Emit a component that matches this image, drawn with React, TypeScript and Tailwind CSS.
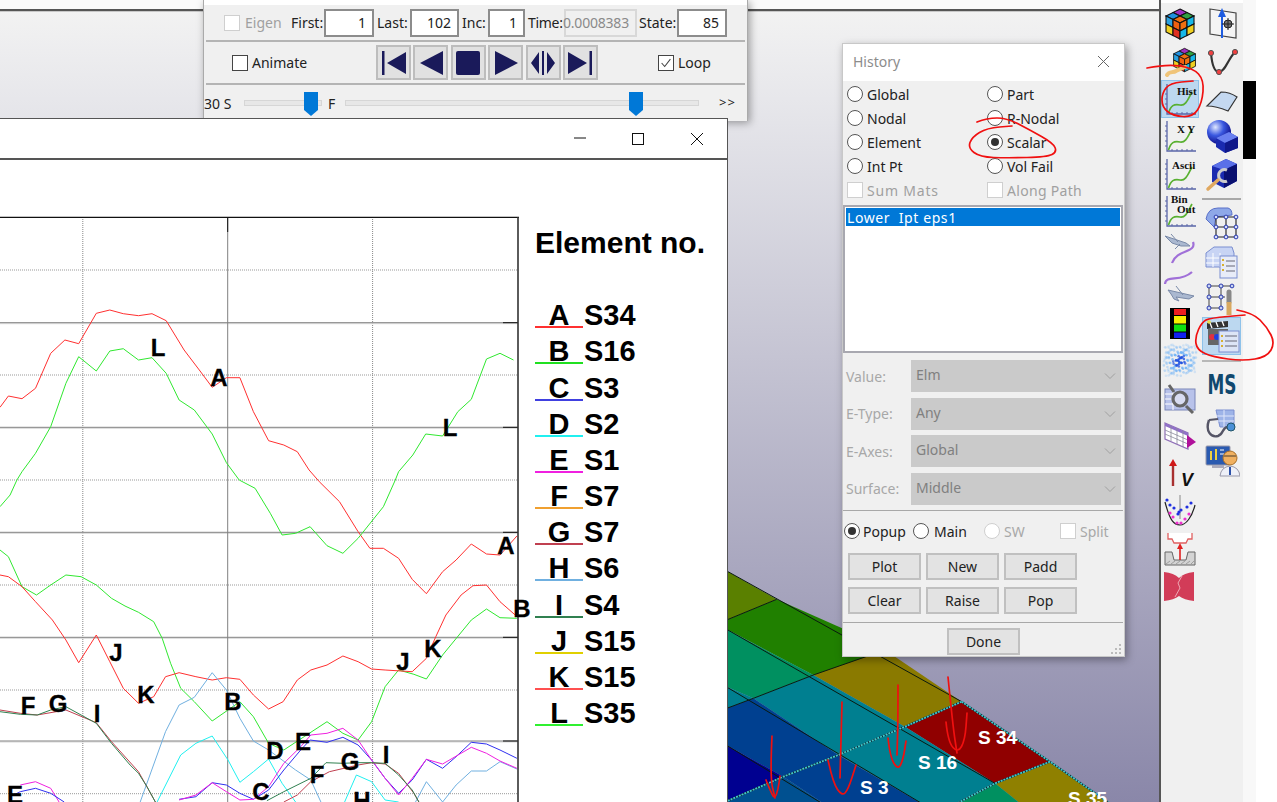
import React from "react";

type P = [number, number];
const z1 = (a: number[]): P[] => { const r: P[] = []; for (let i = 0; i < a.length; i += 2) r.push([a[i] / 2.96, a[i + 1] / 3 + 160]); return r; };
const z2 = (a: number[]): P[] => { const r: P[] = []; for (let i = 0; i < a.length; i += 2) r.push([a[i] / 2.96, a[i + 1] / 3 + 480]); return r; };
const pl = (p: P[]) => p.map(([x, y]) => `${x.toFixed(1)},${y.toFixed(1)}`).join(" ");

const curves: { c: string; p: P[] }[] = [
  { c: "#ff3030", p: [...z1([0,742,25,708,65,716,105,685,150,580,192,540,233,551,285,460,325,450,365,461,410,467,450,461,492,482,545,570,590,630,628,682,670,653,710,653,750,755,795,842,840,855,880,875,915,930]), ...z2([945,5,1005,65,1060,155,1095,205,1135,205,1180,235,1220,298,1262,341,1310,275,1350,240,1395,192,1440,222,1480,225,1530,168])] },
  { c: "#30e830", p: [...z2([0,80,30,45,50,0]), ...z1([65,935,105,880,150,800,195,670,233,590,285,633,325,573,365,566,410,600,450,593,492,640,530,720,575,750,628,822,670,908,708,960]), ...z2([755,25,800,100,835,165,875,160,918,140,968,197,1015,220,1060,175,1135,80,1170,0]), ...z1([1180,935,1222,885,1260,822,1310,828,1355,755,1395,718,1440,597,1480,580,1520,600])] },
  { c: "#30e830", p: z2([0,210,25,230,65,320,108,345,150,315,195,285,240,290,285,315,330,355,370,378,410,397,455,425,480,475,505,550,535,625,575,665,628,723,675,690,710,665,750,710,795,790,840,810,900,770,968,725,1015,760,1060,780,1100,725,1140,620,1180,570,1225,583,1262,597,1310,525,1395,420,1440,387,1480,413,1530,415]) },
  { c: "#ff3030", p: z2([0,285,25,290,65,320,105,365,155,420,195,480,233,548,285,465,325,545,365,625,410,670,455,650,490,590,530,578,580,590,628,600,670,593,710,598,750,645,795,687,838,665,880,600,920,570,968,555,1015,528,1060,545,1100,567,1140,570,1220,575,1262,535,1290,470,1320,405,1365,345,1400,317,1440,315,1480,365,1525,405]) },
  { c: "#20f0f0", p: z2([465,966,535,825,580,790,628,768,675,840,710,907,750,875,795,837,835,910,875,966]) },
  { c: "#20f0f0", p: z2([1020,966,1055,885,1100,905,1140,960,1180,966]) },
  { c: "#70b0e0", p: z2([415,966,490,755,530,675,575,652,628,578,670,630,710,715,750,783,795,810,875,870,920,900,950,966]) },
  { c: "#70b0e0", p: z2([1230,966,1262,905,1310,966,1350,915,1395,873,1440,873,1480,845,1530,867]) },
  { c: "#f020e0", p: z2([60,915,105,905,150,925,175,966]) },
  { c: "#3030f0", p: z2([30,950,60,935,105,925,150,940,190,966]) },
  { c: "#3030f0", p: z2([530,958,580,950,628,908,670,915,710,940,750,958,795,930,840,870,890,810,918,780,968,787,1015,772,1060,795,1100,840,1140,895,1180,940,1220,900,1262,838,1310,865,1350,830,1395,787,1440,792,1480,810,1530,835]) },
  { c: "#f020e0", p: z2([530,960,580,945,628,908,670,935,710,960,750,958,795,920,840,850,890,800,920,765,968,760,1015,745,1060,780,1100,840,1140,895,1180,945,1220,895,1262,838,1310,852,1395,802,1440,820,1480,843,1530,865]) },
  { c: "#c04050", p: z2([0,690,60,700,110,705,195,690,285,728,330,785,410,875,460,966]) },
  { c: "#c04050", p: z2([840,966,880,945,920,905,975,875,1060,855,1100,848,1140,852,1180,880,1225,940,1240,966]) },
  { c: "#308050", p: z2([0,695,60,703,110,705,150,690,195,680,240,705,285,730,330,790,385,855,410,880,435,920,460,966]) },
  { c: "#308050", p: z2([790,962,840,935,920,895,965,848,1015,850,1060,848,1100,848,1140,850,1180,885,1220,930,1240,966]) },
];

const labels: [string, number, number][] = [
  ["L",158,347],["A",219,377],["L",450,427],["A",506,545],["B",522,608],["J",116,652],["K",146,694],["F",28,705],["G",58,703],["I",97,713],["B",233,701],["D",275,750],["E",303,741],["C",261,791],["F",317,774],["G",350,761],["I",386,754],["H",362,800],["E",15,794],["J",403,661],["K",433,648],
];

const solidY = [322.7, 427.3, 532.3, 637.3, 741];
const dotY = [270, 375, 480, 585, 690, 793.7];

function Chart() {
  return (
    <svg width="520" height="642" viewBox="0 160 520 642" className="shrink-0 overflow-visible">
      {dotY.map((y) => <line key={y} x1="0" x2="517" y1={y} y2={y} stroke="#999" strokeDasharray="1 1" />)}
      {[82.8, 372.6].map((x) => <line key={x} x1={x} x2={x} y1="217" y2="802" stroke="#888" strokeDasharray="1 1" />)}
      {solidY.map((y) => (
        <g key={y}>
          <line x1="0" x2="518" y1={y + 1} y2={y + 1} stroke="#d8d8d8" />
          <line x1="0" x2="518" y1={y} y2={y} stroke="#808080" />
          <line x1="503" x2="518" y1={y} y2={y} stroke="#111" />
        </g>
      ))}
      <line x1="227.7" x2="227.7" y1="217" y2="802" stroke="#808080" />
      <line x1="227.7" x2="227.7" y1="217" y2="232" stroke="#111" />
      <line x1="0" x2="519" y1="217.3" y2="217.3" stroke="#111" strokeWidth="1.2" />
      <line x1="518" x2="518" y1="217" y2="802" stroke="#333" strokeWidth="1.6" />
      {curves.map((c, i) => <polyline key={i} points={pl(c.p)} fill="none" stroke={c.c} strokeWidth="1" />)}
      {labels.map(([t, x, y], i) => (
        <text key={i} x={x} y={y + 8.5} textAnchor="middle" fontSize="24" fontWeight="700" fontFamily="'Liberation Sans', Arial, sans-serif" fill="#000" stroke="#000" strokeWidth="0.3">{t}</text>
      ))}
    </svg>
  );
}

const legend: [string, string, string][] = [
  ["A","S34","border-[#ff3030]"],["B","S16","border-[#20e020]"],["C","S3","border-[#4040e0]"],["D","S2","border-[#20f0f0]"],["E","S1","border-[#f020e0]"],["F","S7","border-[#f0a030]"],["G","S7","border-[#c04050]"],["H","S6","border-[#70b0e0]"],["I","S4","border-[#308050]"],["J","S15","border-[#e0d000]"],["K","S15","border-[#ff5050]"],["L","S35","border-[#30f030]"],
];

function Legend() {
  return (
    <div className="ml-[15px] flex flex-col font-['Liberation_Sans',Arial,sans-serif] font-bold text-black">
      <div className="mt-[66px] text-[30px] leading-[34px] whitespace-nowrap">Element no.</div>
      <div className="mt-[32px] flex flex-col">
        {legend.map(([l, s, b]) => (
          <div key={l} className="flex h-[36.18px] items-end text-[29px]">
            <span className={`w-12 border-b-2 text-center leading-[22px] ${b}`}>{l}</span>
            <span className="ml-px mb-[2px] leading-[22px]">{s}</span>
          </div>
        ))}
      </div>
    </div>
  );
}

function PlotWindow() {
  return (
    <div className="absolute left-0 top-[118px] flex h-[684px] w-[728px] flex-col overflow-hidden border-r border-t border-[#555] bg-white">
      <div className="flex h-[41px] shrink-0 items-start border-b-2 border-[#555] bg-white">
        <svg width="727" height="36" viewBox="0 119 727 36" className="shrink-0">
          <line x1="574" x2="586" y1="138" y2="138" stroke="#111" />
          <rect x="632.5" y="133.5" width="11" height="11" fill="none" stroke="#111" />
          <path d="M691 133 L703 145 M703 133 L691 145" stroke="#111" fill="none" />
        </svg>
      </div>
      <div className="flex min-h-0 flex-1">
        <Chart />
        <Legend />
      </div>
    </div>
  );
}

const Check = ({ dis, on }: { dis?: boolean; on?: boolean }) => (
  <span className={`flex h-4 w-4 shrink-0 items-center justify-center border bg-white ${dis ? "border-[#cfcfcf]" : "border-[#444]"}`}>
    {on && <svg viewBox="0 0 16 16" className="h-3.5 w-3.5"><path d="M3 8 L6.5 12 L13 3.5" fill="none" stroke="#444" strokeWidth="1.2" /></svg>}
  </span>
);

const Radio = ({ on, dis }: { on?: boolean; dis?: boolean }) => (
  <span className={`flex h-4 w-4 shrink-0 items-center justify-center rounded-full border-[1.5px] bg-white ${dis ? "border-[#cfcfcf]" : "border-[#555]"}`}>
    {on && <span className="h-2 w-2 rounded-full bg-[#333]" />}
  </span>
);

const Field = ({ v, w, dis }: { v: string; w: string; dis?: boolean }) => (
  <div className={`flex h-7 items-center justify-end border-2 pr-[6px] ${w} ${dis ? "border-[#d8d8d8] bg-[#f0f0f0] pr-[2px] tracking-[-0.2px] text-[#8a8a8a]" : "border-[#8c8c8c] bg-white text-[#222]"}`}>{v}</div>
);

const Glyph = ({ d }: { d: string }) => (
  <div className="flex h-[35px] w-[35px] items-center justify-center border-2 border-[#bdbdbd] bg-[#e1e1e1]">
    <svg viewBox="0 0 30 30" className="h-[30px] w-[30px]"><path d={d} fill="#1a1a5a" /></svg>
  </div>
);

const Thumb = ({ left }: { left: string }) => (
  <svg viewBox="0 0 14 24" className={`absolute top-[-9px] h-6 w-[14px] ${left}`}><path d="M0,0 H14 V18 L7,24 L0,18 Z" fill="#0078d7" /></svg>
);

function AnimWindow() {
  return (
    <div className="absolute left-[203px] top-0 flex h-[121px] w-[545px] flex-col border-x border-[#aaa] bg-white text-[14px] text-[#222] shadow-[2px_2px_8px_rgba(0,0,0,0.35)]">
      <div className="mt-[5px] flex flex-1 flex-col bg-[#f0f0f0]">
        <div className="flex h-[35px] shrink-0 items-center pl-5">
          <Check dis />
          <span className="ml-[5px] w-[46px] text-[#a0a0a0]">Eigen</span>
          <span className="w-[33px]">First:</span><Field v="1" w="w-[50px]" />
          <span className="w-[36px] pl-[3px]">Last:</span><Field v="102" w="w-[49px]" />
          <span className="w-[29px] pl-[3px]">Inc:</span><Field v="1" w="w-[37px]" />
          <span className="w-[39px] pl-[3px] tracking-[-0.3px]">Time:</span><Field v="0.0008383" w="w-[73px]" dis />
          <span className="w-[40px] pl-[2px]">State:</span><Field v="85" w="w-[50px]" />
        </div>
        <div className="mx-[2px] h-[2px] shrink-0 bg-[#b4b4b4]" />
        <div className="flex h-[41px] shrink-0 items-center pl-7">
          <Check />
          <span className="ml-[4px] w-[125px]">Animate</span>
          <div className="-ml-px flex gap-[2.4px]">
            <Glyph d="M3 3 H5.5 V27 H3 Z M8 15 L27 4 V26 Z" />
            <Glyph d="M4 15 L27 3 V27 Z" />
            <Glyph d="M3 5 Q3 3 5 3 H25 Q27 3 27 5 V25 Q27 27 25 27 H5 Q3 27 3 25 Z" />
            <Glyph d="M4 3 L27 15 L4 27 Z" />
            <Glyph d="M3 15 L11 4 V26 Z M14 3 H16 V27 H14 Z M19 4 L27 15 L19 26 Z" />
            <Glyph d="M3 4 L22 15 L3 26 Z M24.5 3 H27 V27 H24.5 Z" />
          </div>
          <span className="ml-[60px]"><Check on /></span>
          <span className="ml-1">Loop</span>
        </div>
        <div className="mx-[2px] h-[2px] shrink-0 bg-[#b4b4b4]" />
        <div className="flex flex-1 items-center">
          <span className="w-[40px]">30 S</span>
          <div className="relative h-[6px] w-[78px] border border-[#d6d6d6] bg-[#e7e7e7]"><Thumb left="left-[59px]" /></div>
          <span className="w-[23px] pl-[6px]">F</span>
          <div className="relative h-[6px] w-[354px] border border-[#d6d6d6] bg-[#e7e7e7]"><Thumb left="left-[283px]" /></div>
          <span className="ml-[20px] text-[13px] tracking-[1px]">&gt;&gt;</span>
        </div>
      </div>
    </div>
  );
}

const HBtn = ({ t }: { t: string }) => (
  <div className="flex h-[27px] w-[73px] items-center justify-center border-2 border-[#c0c0c0] bg-[#e3e3e3] text-[#222]">{t}</div>
);

const Sel = ({ label, v }: { label: string; v: string }) => (
  <div className="flex h-8 items-center">
    <span className="ml-[3px] w-[65px] text-[#a8a8a8]">{label}</span>
    <div className="flex h-8 w-[210px] items-center justify-between bg-[#cacaca] pl-[5px] pr-[5px] text-[#808080]">
      <span className="-mt-[3px]">{v}</span>
      <svg width="12" height="8" viewBox="0 0 12 8"><path d="M1 1.5 L6 6.5 L11 1.5" fill="none" stroke="#a0a0a0" /></svg>
    </div>
  </div>
);

function HistoryWindow() {
  const rows: [string, string, boolean?][] = [["Global","Part"],["Nodal","R-Nodal"],["Element","Scalar",true],["Int Pt","Vol Fail"]];
  return (
    <div className="absolute left-[842px] top-[43px] flex h-[614px] w-[283px] flex-col border border-[#c8c8c8] bg-[#f0f0f0] text-[14px] text-[#222] shadow-[2px_3px_8px_rgba(0,0,0,0.35)]">
      <div className="flex h-[37px] shrink-0 items-center justify-between bg-white pb-[2px] pl-[10px] pr-[14px] text-[#8c8c8c]">
        <span>History</span>
        <svg width="13" height="13" viewBox="0 0 13 13"><path d="M1 1 L12 12 M12 1 L1 12" stroke="#666" fill="none" /></svg>
      </div>
      <div className="mt-[1px] flex flex-col pl-1">
        {rows.map(([a, b, on]) => (
          <div key={a} className="flex h-6 items-center">
            <div className="flex w-[140px] items-center gap-1"><Radio /><span>{a}</span></div>
            <div className="flex items-center gap-1"><Radio on={on} /><span>{b}</span></div>
          </div>
        ))}
        <div className="flex h-6 items-center text-[#a0a0a0]">
          <div className="flex w-[140px] items-center gap-1"><Check dis /><span className="tracking-[0.8px]">Sum Mats</span></div>
          <div className="flex items-center gap-1"><Check dis /><span className="tracking-[0.3px]">Along Path</span></div>
        </div>
      </div>
      <div className="ml-[0px] mt-[3px] h-[148px] w-[280px] shrink-0 border-2 border-[#a8a8b0] bg-white p-px">
        <div className="flex h-[18px] items-center whitespace-pre bg-[#0078d7] pl-[1px] tracking-[0.6px] text-white">Lower  Ipt eps1</div>
      </div>
      <div className="mt-[7px] flex flex-col gap-[5.5px]">
        <Sel label="Value:" v="Elm" />
        <Sel label="E-Type:" v="Any" />
        <Sel label="E-Axes:" v="Global" />
        <Sel label="Surface:" v="Middle" />
      </div>
      <div className="mt-[5px] h-px w-[280px] shrink-0 bg-[#a8a8a8]" />
      <div className="flex h-[42px] shrink-0 items-center pl-[1px] pb-[1px]">
        <Radio on /><span className="ml-[3px] w-[50px]">Popup</span>
        <Radio /><span className="ml-[5px] w-[50px]">Main</span>
        <Radio dis /><span className="ml-1 w-[56px] text-[#a8a8a8]">SW</span>
        <Check dis /><span className="ml-1 text-[#a8a8a8]">Split</span>
      </div>
      <div className="flex gap-[5px] pl-[5px]"><HBtn t="Plot" /><HBtn t="New" /><HBtn t="Padd" /></div>
      <div className="mt-[7px] flex gap-[5px] pl-[5px]"><HBtn t="Clear" /><HBtn t="Raise" /><HBtn t="Pop" /></div>
      <div className="mt-[8px] h-px w-[280px] shrink-0 bg-[#a8a8a8]" />
      <div className="mt-[5px] flex justify-center"><HBtn t="Done" /></div>
      <svg width="11" height="10" viewBox="0 0 11 10" className="absolute bottom-[2px] right-[2px]" fill="#bbb">
        <rect x="8" y="0" width="2" height="2" /><rect x="4" y="4" width="2" height="2" /><rect x="8" y="4" width="2" height="2" /><rect x="0" y="8" width="2" height="2" /><rect x="4" y="8" width="2" height="2" /><rect x="8" y="8" width="2" height="2" />
      </svg>
    </div>
  );
}

const zm = (x: number, y: number) => `${x / 3 + 725},${y / 3 + 560}`;
const poly = (a: number[]) => { const r: string[] = []; for (let i = 0; i < a.length; i += 2) r.push(zm(a[i], a[i + 1])); return r.join(" "); };

function Mesh() {
  const cells: [string, number[]][] = [
    ["#5a8000", [0,30,155,118,0,182]],
    ["#208000", [155,118,0,182,0,205,265,345,520,280,480,262]],
    ["#009060", [0,205,265,345,85,415,0,378]],
    ["#8a7a00", [480,270,710,425,540,500,265,345]],
    ["#007f90", [265,345,540,500,340,585,85,415]],
    ["#007f90", [0,378,85,415,0,447]],
    ["#004090", [0,447,85,415,340,585,175,650,0,553]],
    ["#000090", [0,553,175,650,0,726]],
    ["#900000", [710,425,975,605,810,670,540,500]],
    ["#007f90", [540,500,810,670,640,760,340,585]],
    ["#004090", [340,585,640,760,340,760,175,650]],
    ["#005090", [175,650,340,760,0,760,0,726]],
    ["#8f8000", [975,605,1240,790,960,790,810,670]],
    ["#009060", [810,670,960,790,640,760]],
  ];
  const black = [[0,30,710,425],[0,205,810,670],[0,378,640,760],[0,553,340,760],[155,118,0,182],[480,270,265,345,85,415,0,447]];
  const cyan = [[710,425,975,605,1240,790],[710,425,540,500,340,585,175,650,0,726],[975,605,810,670,640,760]];
  return (
    <svg width="1277" height="802" viewBox="0 0 1277 802" className="absolute left-0 top-0">
      {cells.map(([c, p], i) => <polygon key={i} points={poly(p)} fill={c} />)}
      {black.map((p, i) => <polyline key={i} points={poly(p)} fill="none" stroke="#0a1a10" strokeWidth="1" />)}
      {cyan.map((p, i) => (
        <g key={i}>
          <polyline points={poly(p)} fill="none" stroke="#123" strokeWidth="1.8" />
          <polyline points={poly(p)} fill="none" stroke="#40c8c8" strokeWidth="1.8" strokeDasharray="2 1" />
        </g>
      ))}
      {([["S 34",978,744],["S 16",918,769],["S 3",860,794],["S 35",1068,805]] as [string, number, number][]).map(([t, x, y]) => (
        <text key={t} x={x} y={y} fontSize="19" fontWeight="700" fill="#fff" fontFamily="'Liberation Sans', Arial, sans-serif">{t}</text>
      ))}
    </svg>
  );
}

const smooth = (a: number[]) => {
  let d = `M${a[0]},${a[1]}`;
  for (let i = 2; i < a.length - 2; i += 2) {
    const mx = (a[i] + a[i + 2]) / 2, my = (a[i + 1] + a[i + 3]) / 2;
    d += ` Q${a[i]},${a[i + 1]} ${mx},${my}`;
  }
  d += ` L${a[a.length - 2]},${a[a.length - 1]}`;
  return d;
};

function Marks() {
  const strokes = [
    [1147,68,1167,64,1193,68,1204,80,1202,103,1193,117,1173,116,1162,107,1162,93,1170,83,1193,81],
    [1237,310,1253,313,1267,327,1275,343,1267,357,1243,361,1213,357,1197,350,1195,337,1202,322,1210,318,1245,315],
    [977,122,987,118,1007,118,1030,130,1053,143,1057,152,1047,157,1007,158,980,157,968,148,972,137,987,128,1012,126],
    [772,736,770,777,775,798],[766,780,772,795,775,798,778,790,780,776],
    [842,702,841,740,840,778],[828,760,833,783,842,796,848,790,856,765],
    [898,685,898,720,897,755],[888,738,890,757,898,770,903,760,906,741],
    [948,677,953,727,957,753],[946,722,948,742,958,753,965,740,967,713],
  ];
  return (
    <svg width="1277" height="802" viewBox="0 0 1277 802" className="pointer-events-none absolute left-0 top-0">
      {strokes.map((s, i) => <path key={i} d={smooth(s)} fill="none" stroke="#f01010" strokeWidth="1.7" strokeLinecap="round" />)}
    </svg>
  );
}

const Ic = ({ children }: { children: React.ReactNode }) => (
  <svg viewBox="0 0 36 36" className="h-9 w-9">{children}</svg>
);

function Face({ q, c }: { q: P[]; c: string[] }) {
  const f = (u: number, v: number) => {
    const x = q[0][0] * (1 - u) * (1 - v) + q[1][0] * u * (1 - v) + q[2][0] * u * v + q[3][0] * (1 - u) * v;
    const y = q[0][1] * (1 - u) * (1 - v) + q[1][1] * u * (1 - v) + q[2][1] * u * v + q[3][1] * (1 - u) * v;
    return `${x},${y}`;
  };
  return (
    <>
      {[0, 1, 2, 3].map((k) => {
        const i = k % 2, j = k >> 1;
        return <polygon key={k} points={`${f(i / 2, j / 2)} ${f((i + 1) / 2, j / 2)} ${f((i + 1) / 2, (j + 1) / 2)} ${f(i / 2, (j + 1) / 2)}`} fill={c[k]} stroke="#111" strokeWidth="1.1" />;
      })}
    </>
  );
}

const Cube = () => (
  <>
    <Face q={[[18,3],[32,10],[18,17],[4,10]]} c={["#a030c0","#30a040","#2090e0","#f07010"]} />
    <Face q={[[4,10],[18,17],[18,33],[4,26]]} c={["#2aa0e0","#f06010","#f0d020","#e03020"]} />
    <Face q={[[18,17],[32,10],[32,26],[18,33]]} c={["#f07010","#18b8e8","#18b8e8","#f0d020"]} />
  </>
);

const Graph = ({ t, x, y, t2 }: { t: string; x: number; y: number; t2?: string }) => (
  <Ic>
    <path d="M5 3 V33 H34" fill="none" stroke="#5a66a8" strokeWidth="1.3" />
    <path d="M3 8 H5 M3 13 H5 M3 18 H5 M3 23 H5 M3 28 H5 M10 33 V31 M15 33 V31 M20 33 V31 M25 33 V31 M30 33 V31" stroke="#5a66a8" strokeWidth="1" />
    <path d="M6.5 32 C9 24 12 23 18 24 C24 25 26 18 30 11" fill="none" stroke="#58b030" strokeWidth="1.7" />
    <text x={x} y={y} fontSize="11" fontWeight="700" fontFamily="'Liberation Serif', serif" fill="#111">{t}</text>
    {t2 && <text x="15" y="20" fontSize="11" fontWeight="700" fontFamily="'Liberation Serif', serif" fill="#111">{t2}</text>}
  </Ic>
);

const Plane = ({ flip }: { flip?: boolean }) => (
  <Ic>
    {flip ? (
      <>
        <path d="M3 16 C4 6 18 15 30 4" fill="none" stroke="#a070d8" strokeWidth="2.2" />
        <path d="M6 22 L32 28 L27 31 L14 29 L17 33 L12 31 L9 26 Z M14 18 L21 27" fill="#aab8d0" stroke="#7a8aa8" strokeWidth="1" />
      </>
    ) : (
      <>
        <path d="M3 5 L24 12 L28 15 L19 15 L10 12 Z M9 3 L16 11 M13 18 L18 13" fill="#aab8d0" stroke="#7a8aa8" strokeWidth="1" />
        <path d="M31 11 C35 22 15 18 10 32" fill="none" stroke="#a070d8" strokeWidth="2.2" />
      </>
    )}
  </Ic>
);

const Film = () => (
  <Ic>
    <rect x="8" y="2" width="20" height="31" fill="#000" />
    <rect x="12" y="3" width="12" height="6" fill="#f02020" />
    <rect x="12" y="10" width="12" height="7.5" fill="#f8f000" />
    <rect x="12" y="18.5" width="12" height="7" fill="#10e010" />
    <rect x="12" y="26.5" width="12" height="5.5" fill="#1020f0" />
  </Ic>
);

const Splash = () => {
  const dots = Array.from({ length: 150 }, (_, i) => {
    const x = 3 + (i % 13) * 2.5 + Math.sin(i * 7.3) * 1.2, y = 3 + Math.floor(i / 13) * 2.6 + Math.cos(i * 5.1) * 1.2;
    const r = Math.hypot(x - 18, y - 18);
    return { x, y, o: Math.max(0.2, 1 - r / 20), c: r < 7 ? "#1e50e0" : "#58a8f8" };
  });
  return <Ic>{dots.map((d, i) => <circle key={i} cx={d.x} cy={d.y} r="1.3" fill={d.c} opacity={d.o} />)}</Ic>;
};

const GearTable = () => (
  <Ic>
    <rect x="3" y="8" width="30" height="21" fill="#b8c2ea" stroke="#7a86b8" />
    <path d="M3 13 H14 M3 18 H14 M3 23 H14 M11 8 V29" stroke="#fff" />
    <circle cx="18" cy="18" r="7" fill="#d8dcf0" stroke="#666" strokeWidth="3.2" />
    <path d="M7 4 L12 11 M24 25 L31 32" stroke="#666" strokeWidth="3" />
  </Ic>
);

const PurpleTable = () => (
  <Ic>
    <path d="M3 5 L26 15 V31 L3 21 Z" fill="#fff" stroke="#9070b8" strokeWidth="1.2" />
    <path d="M3 5 L26 15 V18 L3 8 Z" fill="#9070c8" />
    <path d="M3 12 L26 22 M3 16 L26 26 M9 8 V23 M15 10 V26 M21 13 V29" stroke="#8a8a9a" strokeWidth=".8" />
    <path d="M25 17 L34 24 L25 30 Z" fill="#b0109a" />
  </Ic>
);

const ArrowV = () => (
  <Ic>
    <path d="M11 9 V30" stroke="#a83030" strokeWidth="2.4" />
    <path d="M11 3 L15 10 H7 Z" fill="#d01818" />
    <text x="19" y="30" fontSize="18" fontStyle="italic" fontWeight="700" fontFamily="'Liberation Sans', sans-serif" fill="#111">V</text>
  </Ic>
);

const Parabola = () => (
  <Ic>
    <path d="M18 2 V26" stroke="#888" strokeWidth="1" />
    <path d="M3 9 C8 28 12 32 18 32 C24 32 30 24 33 12" fill="none" stroke="#222" strokeWidth="1.2" />
    {([[5,7],[8,12],[12,15],[17,19],[19,17],[25,14],[29,10],[16,21]] as P[]).map(([x, y], i) => <circle key={i} cx={x} cy={y} r="1.6" fill="#2030e0" />)}
    {([[8,20],[11,24],[15,30],[19,30],[23,26],[27,21]] as P[]).map(([x, y], i) => <circle key={i} cx={x} cy={y} r="1.6" fill="#f030d0" />)}
  </Ic>
);

const Stamp = () => (
  <Ic>
    <path d="M6 2 V8 L10 8 L12 12 H24 L26 8 L30 8 V2" fill="#fff" stroke="#e06060" strokeWidth="1.3" />
    <path d="M3 21 H10 L12 29 H24 L26 21 H33 V34 H3 Z" fill="#d4d4d4" stroke="#666" />
    <path d="M4 33 L8 30 M9 33 L13 30 M14 33 L18 30 M19 33 L23 30 M24 33 L28 30 M29 33 L32 30" stroke="#888" strokeWidth=".7" />
    <path d="M18 16 V29" stroke="#e02020" strokeWidth="1.6" />
    <path d="M18 12 L21 18 H15 Z" fill="#e02020" />
  </Ic>
);

const RedShape = () => (
  <Ic>
    <path d="M2 4 Q12 5 17 10 Q22 5 32 4 V33 Q22 32 17 28 Q12 32 2 33 Z" fill="#d23c58" />
    <path d="M20 8 L16 15 L18 20 L13 29" fill="none" stroke="#f4c4cc" strokeWidth=".8" />
  </Ic>
);

const FrameArrow = () => (
  <Ic>
    <path d="M6 3 L32 7 V32 L6 28 Z" fill="#f4f4f4" stroke="#444" strokeWidth="1.2" />
    <path d="M18 8 V32" stroke="#1e5ce0" strokeWidth="2" />
    <path d="M18 2 L22 11 H14 Z" fill="#1e5ce0" />
    <circle cx="24" cy="18" r="4" fill="#777" stroke="#222" />
    <path d="M24 12 V24 M18 18 H30" stroke="#222" />
  </Ic>
);

const NodeCurve = () => (
  <Ic>
    <path d="M7 10 C8 22 11 29 15 29 C21 29 24 16 31 9" fill="none" stroke="#333" strokeWidth="2.2" />
    <circle cx="7" cy="10" r="2.6" fill="#f04040" stroke="#555" />
    <circle cx="15" cy="29" r="2.6" fill="#f04040" stroke="#555" />
    <circle cx="31" cy="9" r="2.6" fill="#f04040" stroke="#555" />
  </Ic>
);

const Surface = () => (
  <Ic><path d="M3 25 L17 11 Q26 11 33 16 L24 30 Q12 25 3 25 Z" fill="#c4d8f0" stroke="#333" strokeWidth="1.2" /></Ic>
);

const SphereCube = () => (
  <Ic>
    <defs>
      <radialGradient id="sp" cx="35%" cy="30%" r="70%"><stop offset="0" stopColor="#e0e8ff" /><stop offset=".5" stopColor="#3a58e0" /><stop offset="1" stopColor="#10108a" /></radialGradient>
    </defs>
    <circle cx="15" cy="14" r="12" fill="url(#sp)" />
    <path d="M12 20 L25 14 L34 19 V30 L21 35 L12 29 Z" fill="#1a2ab0" />
    <path d="M12 20 L25 14 L34 19 L21 25 Z" fill="#6a80f0" />
    <path d="M21 25 L34 19 V30 L21 35 Z" fill="#10188a" />
  </Ic>
);

const WrenchCube = () => (
  <Ic>
    <path d="M8 10 L22 3 L33 8 V25 L20 32 L8 26 Z" fill="#1a2ab0" />
    <path d="M8 10 L22 3 L33 8 L20 14 Z" fill="#5a70e8" />
    <path d="M20 14 L33 8 V25 L20 32 Z" fill="#0a1070" />
    <path d="M23 14 A6 6 0 1 0 23 25" fill="none" stroke="#ccc" strokeWidth="3" />
    <path d="M14 24 L4 33" stroke="#e0a860" strokeWidth="3.5" strokeLinecap="round" />
  </Ic>
);

const MeshIcon = () => (
  <Ic>
    <path d="M2 14 Q4 3 14 3 H24 Q28 4 28 10 L12 12 L10 22 Z" fill="#8ea8e8" stroke="#5a70c8" />
    <path d="M12 12 H32 M12 22 H32 M12 32 H32 M12 12 V32 M22 12 V32 M32 12 V32" stroke="#222" strokeWidth="1.1" />
    {[12, 22, 32].flatMap((x) => [12, 22, 32].map((y) => <circle key={`${x}-${y}`} cx={x} cy={y} r="1.9" fill="#d8e0fa" stroke="#2a3ab0" />))}
  </Ic>
);

const ListTable = () => (
  <Ic>
    <path d="M2 10 L10 4 H28 L30 10 V24 H2 Z" fill="#c8d4f4" stroke="#7a8ed0" />
    <path d="M2 15 H22 M2 20 H22 M9 10 V24 M16 10 V24" stroke="#fff" />
    <rect x="16" y="13" width="17" height="22" fill="#e8ecf8" stroke="#7a8ed0" />
    <path d="M22 18 H31 M22 23 H31 M22 28 H31" stroke="#667" />
    <path d="M18 17 H20 M18 22 H20 M18 27 H20" stroke="#d8b030" strokeWidth="2" />
  </Ic>
);

const NodeWrench = () => (
  <Ic>
    <path d="M5 6 H28 M5 17 H21 M5 28 H18 M5 6 V28 M17 6 V28" stroke="#444" />
    <circle cx="28" cy="6" r="1.9" fill="#c8d4f4" stroke="#2a3ab0" />
    {[5, 17].flatMap((x) => [6, 17, 28].map((y) => <circle key={`${x}-${y}`} cx={x} cy={y} r="2" fill="#c8d4f4" stroke="#2a3ab0" />))}
    <path d="M25 12 L25 22" stroke="#888" strokeWidth="5" strokeLinecap="round" />
    <path d="M25 22 V35" stroke="#d8a860" strokeWidth="5" />
  </Ic>
);

const Clapper = () => (
  <Ic>
    <rect x="4" y="11" width="20" height="16" fill="#666" />
    <path d="M3 5 L24 3 V9 L3 11 Z" fill="#333" />
    <path d="M6 5 L8 10 M12 4 L14 9 M18 3 L20 8" stroke="#fff" strokeWidth="1.3" />
    <circle cx="5" cy="4" r="1.8" fill="#f0e040" />
    <circle cx="8" cy="19" r="3" fill="#e03040" />
    <circle cx="13" cy="19" r="3" fill="#2040e0" />
    <rect x="15" y="13" width="20" height="21" fill="#dce4f6" stroke="#7a8ed0" />
    <path d="M21 18 H33 M21 23 H33 M21 28 H33" stroke="#667" />
    <path d="M17 18 H19 M17 23 H19 M17 28 H19" stroke="#d8b030" strokeWidth="2" />
  </Ic>
);

const MS = () => (
  <Ic>
    <text x="3.5" y="27" fontSize="27" fontWeight="700" textLength="29" lengthAdjust="spacingAndGlyphs" fontFamily="'DejaVu Sans', sans-serif" fill="#10486e">MS</text>
  </Ic>
);

const Stetho = () => (
  <Ic>
    <path d="M12 5 H30 V22 H16 Z" fill="#9eb4e8" stroke="#7a8ed0" />
    <path d="M12 11 H30 M12 16 H30 M20 5 V22" stroke="#dfe6fa" />
    <path d="M5 15 C1 26 7 33 14 31 C20 29 18 22 24 22" fill="none" stroke="#556" strokeWidth="2.4" />
    <path d="M5 15 L14 14" stroke="#556" strokeWidth="2.2" />
    <circle cx="27" cy="22" r="4" fill="#4a90d8" stroke="#256" />
  </Ic>
);

const Person = () => (
  <Ic>
    <rect x="2" y="4" width="24" height="19" rx="1" fill="#2a5ab0" stroke="#99a" />
    <path d="M7 9 V18 M12 7 V18" stroke="#f0d040" strokeWidth="2" />
    <path d="M16 8 L20 8 M16 12 H20" stroke="#fff" />
    <rect x="8" y="23" width="12" height="3" fill="#aab" />
    <circle cx="26" cy="16" r="7" fill="#f0b060" stroke="#a8702a" />
    <path d="M20 14 H32" stroke="#8a6a40" strokeWidth="1.6" />
    <path d="M16 34 Q17 25 26 24 Q35 25 36 34 Z" fill="#eef0f8" stroke="#99a" />
    <path d="M26 25 V33" stroke="#2a50a8" strokeWidth="2" />
  </Ic>
);

const Slot = ({ children, on }: { children: React.ReactNode; on?: boolean }) => (
  <div className={`flex h-[37.5px] w-full shrink-0 items-center justify-center ${on ? "border border-[#8ec2ea] bg-[#bcd8f0]" : ""}`}>{children}</div>
);

function Toolbar() {
  return (
    <>
      <div className="mt-[3px] flex h-[799px] w-[82px] shrink-0 gap-[3px] bg-[#f0f0f0] pt-[2px]">
        <div className="flex w-[38px] flex-col">
          <Slot><Ic><Cube /></Ic></Slot>
          <Slot>
            <Ic>
              <g transform="translate(8.5 3) scale(.78)"><Cube /></g>
              <path d="M5 32 C7 28 11 30 14 28 L23 24" fill="none" stroke="#f0c478" strokeWidth="4" strokeLinecap="round" />
            </Ic>
          </Slot>
          <Slot on><Graph t="Hist" x="15" y="14" /></Slot>
          <Slot><Graph t="X Y" x="15" y="15" /></Slot>
          <Slot><Graph t="Ascii" x="10" y="13" /></Slot>
          <Slot><Graph t="Bin" x="9" y="10" t2="Out" /></Slot>
          <Slot><Plane /></Slot>
          <Slot><Plane flip /></Slot>
          <Slot><Film /></Slot>
          <Slot><Splash /></Slot>
          <Slot><GearTable /></Slot>
          <Slot><PurpleTable /></Slot>
          <Slot><ArrowV /></Slot>
          <Slot><Parabola /></Slot>
          <Slot><Stamp /></Slot>
          <Slot><RedShape /></Slot>
        </div>
        <div className="flex w-[39px] flex-col">
          <Slot><FrameArrow /></Slot>
          <Slot><NodeCurve /></Slot>
          <Slot><Surface /></Slot>
          <Slot><SphereCube /></Slot>
          <Slot><WrenchCube /></Slot>
          <div className="my-[5px] h-[2px] w-full shrink-0 bg-[#a8a8a8]" />
          <Slot><MeshIcon /></Slot>
          <Slot><ListTable /></Slot>
          <Slot><NodeWrench /></Slot>
          <Slot on><Clapper /></Slot>
          <div className="my-[5px] h-[2px] w-full shrink-0 bg-[#b8b8b8]" />
          <Slot><MS /></Slot>
          <Slot><Stetho /></Slot>
          <Slot><Person /></Slot>
        </div>
      </div>
      <div className="flex h-[802px] w-[13px] shrink-0 flex-col bg-[#f8f8f8] pt-[81px]">
        <div className="h-[78px] bg-black" />
      </div>
    </>
  );
}

export default function App() {
  return (
    <div className="relative flex h-[802px] w-[1277px] overflow-hidden bg-white font-['Noto_Sans',sans-serif]">
      <div className="flex h-[802px] w-[1161px] shrink-0 flex-col border-r-2 border-[#555]">
        <div className="h-[9px] shrink-0 bg-[#fafafa]" />
        <div className="h-[2px] shrink-0 bg-[#555]" />
        <div className="h-px shrink-0 bg-[#c8c8c8]" />
        <div className="flex-1 bg-[linear-gradient(180deg,#f2f2f2_0%,#e4e4e9_14%,#8a87a9_100%)]" />
      </div>
      <Toolbar />
      <Mesh />
      <AnimWindow />
      <PlotWindow />
      <HistoryWindow />
      <Marks />
    </div>
  );
}
